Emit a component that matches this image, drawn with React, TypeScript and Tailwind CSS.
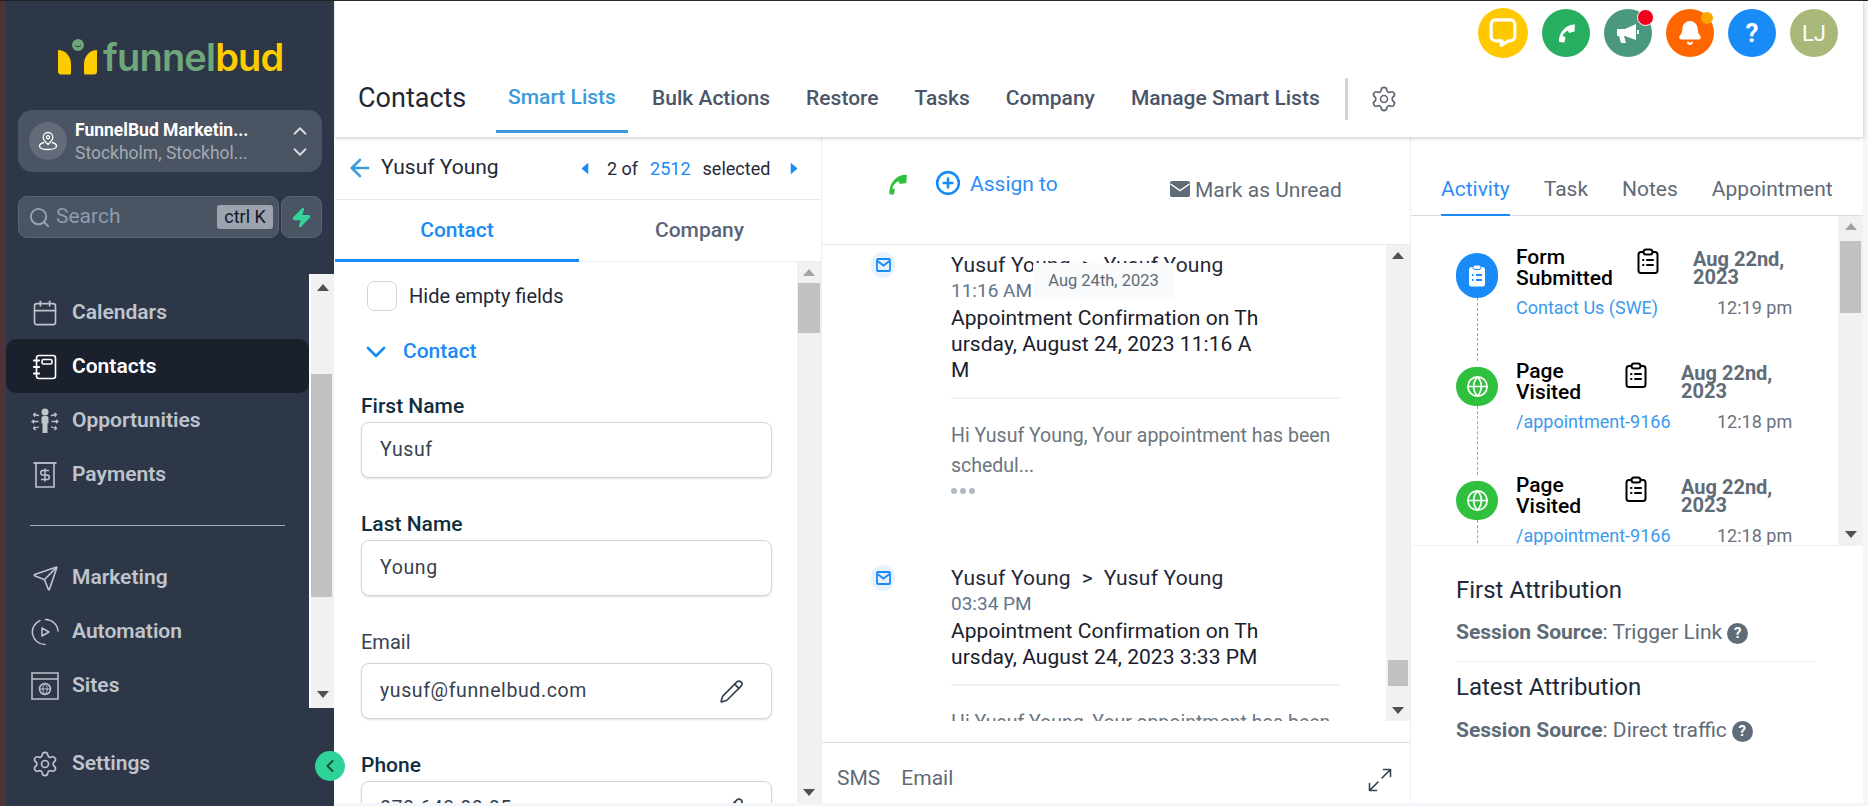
import React from "react";
import { Calendar, Send, Settings, Search, ChevronUp, ChevronDown, ChevronLeft, ArrowLeft, CirclePlus, Pencil, Zap, Bell, Globe } from "lucide-react";

const font = "font-['Roboto','Liberation_Sans',sans-serif]";

function Arrow({ up, className = "" }: { up?: boolean; className?: string }) {
  return (
    <svg width="12" height="7" viewBox="0 0 12 7" className={className}>
      <path d={up ? "M6 0L12 7H0Z" : "M0 0H12L6 7Z"} fill="currentColor" />
    </svg>
  );
}

function Bar({ thumb, w = "w-[24px]", upColor = "text-[#a3a3a3]", pad = "px-[2px]" }: { thumb: string; w?: string; upColor?: string; pad?: string }) {
  return (
    <div className={`${w} shrink-0 bg-[#f1f1f1] flex flex-col items-center relative ${pad}`}>
      <Arrow up className={`mt-[7px] shrink-0 ${upColor}`} />
      <div className={`w-full bg-[#c1c1c1] shrink-0 ${thumb}`} />
      <div className="flex-1" />
      <Arrow className="mb-[7px] shrink-0 text-[#505050]" />
    </div>
  );
}

function Logo() {
  return (
    <div className="flex items-end h-[36px] ml-[52px] mt-[38px]">
      <svg width="44" height="36" viewBox="0 0 44 36" className="shrink-0">
        <path d="M0 11c7 0 13 6 13 14v9a1.500 1.500 0 0 1-1.500 1.500H3c-2 0-3-1-3-3Z" fill="#ffcc00" />
        <path d="M39 11c-7 0-13 6-13 14v9a1.500 1.500 0 0 0 1.500 1.500H36c2 0 3-1 3-3Z" fill="#ffcc00" />
        <circle cx="20" cy="6" r="6" fill="#6fa77a" />
        <path d="M17 6.500c1.500 1.600 4.500 1.600 6 0" stroke="#2d3748" strokeWidth="1" fill="none" />
      </svg>
      <span className="font-['Inter',sans-serif] font-semibold text-[38px] leading-[36px] tracking-[-0.8px] ml-[1px] h-[36px]">
        <span className="text-[#6fa77a]">funnel</span><span className="text-[#ffcc00]">bud</span>
      </span>
    </div>
  );
}

const CalendarIcon = () => <Calendar size={28} strokeWidth={1.4} />;
const NotebookIcon = () => (
  <svg width="28" height="28" viewBox="0 0 28 28" fill="none" stroke="currentColor" strokeWidth="1.600" strokeLinecap="round" strokeLinejoin="round">
    <rect x="5.500" y="2.500" width="19" height="23" rx="2.500" />
    <path d="M3 7.500h5M3 14h5M3 20.500h5" strokeWidth="2.200" />
    <rect x="11" y="6.500" width="10" height="4.500" rx="1.500" />
  </svg>
);
const OppIcon = () => (
  <svg width="30" height="28" viewBox="0 0 30 28" fill="currentColor">
    <circle cx="15" cy="5" r="3.500" />
    <path d="M11.500 11c0-1.200 1-2 2-2h3c1 0 2 .8 2 2v5.500h-1v9.500h-5v-9.500h-1Z" />
    <g stroke="currentColor" strokeWidth="1.300" fill="none" strokeLinecap="round">
      <path d="M8.500 8.500L3.500 7.500M3.500 7.500l1.800-1.200M3.500 7.500l1.200 1.800" />
      <path d="M8 14.500H2M2 14.500l1.600-1.300M2 14.500l1.600 1.300" />
      <path d="M8.500 20L3.500 21.500M3.500 21.500l1.200-1.800M3.500 21.500l1.800 1.200" />
      <path d="M21.500 8.500L26.500 7.500M26.500 7.500l-1.800-1.200M26.500 7.500l-1.200 1.800" />
      <path d="M22 14.500h6M28 14.500l-1.600-1.300M28 14.500l-1.600 1.300" />
      <path d="M21.500 20l5 1.500M26.500 21.500l-1.200-1.800M26.500 21.500l-1.800 1.200" />
    </g>
  </svg>
);
const PayIcon = () => (
  <svg width="28" height="28" viewBox="0 0 28 28" fill="none" stroke="currentColor" strokeWidth="1.600">
    <path d="M2.500 2h23" strokeWidth="1.800" />
    <path d="M5 2v24h18V2" />
    <path d="M18 9.500h-6a1.500 1.500 0 0 0 0 4.500h4a1.500 1.500 0 0 1 0 4.500h-6M14 7.500v13" strokeWidth="1.500" />
  </svg>
);
const AutoIcon = () => (
  <svg width="28" height="28" viewBox="0 0 28 28" fill="none" stroke="currentColor" strokeWidth="1.500" strokeLinecap="round" strokeLinejoin="round">
    <path d="M14.500 1.500A12.500 12.500 0 0 1 27 13" />
    <path d="M9 2.500A12.500 12.500 0 0 0 14 26.500" />
    <path d="M11 10l7 4-7 4Z" />
  </svg>
);
const SiteIcon = () => (
  <svg width="28" height="28" viewBox="0 0 28 28" fill="none" stroke="currentColor" strokeWidth="1.500">
    <rect x="1" y="1" width="26" height="26" />
    <path d="M1 7h26" />
    <circle cx="14" cy="17" r="5.500" />
    <path d="M8.500 17h11M14 11.500c-3 3.500-3 7.500 0 11M14 11.500c3 3.500 3 7.500 0 11" strokeWidth="1" />
  </svg>
);

function NavItem({ icon, label, active }: { icon: React.ReactNode; label: string; active?: boolean }) {
  return (
    <div className={`flex items-center h-[54px] pl-[24px] pt-[2px] rounded-[10px] ${active ? "bg-[#1a202c] text-white" : "text-[#bfc4cc]"}`}>
      <span className="w-[30px] flex justify-center shrink-0">{icon}</span>
      <span className="ml-[12px] text-[21px] font-semibold">{label}</span>
    </div>
  );
}

function Sidebar() {
  return (
    <aside className="w-[328px] shrink-0 bg-[#2d3748] flex flex-col relative">
      <Logo />
      <div className="mx-[12px] mt-[35px] h-[62px] rounded-[14px] bg-[#4a5462] flex items-center pl-[11px]">
        <span className="w-[38px] h-[38px] rounded-full bg-[#636b78] flex items-center justify-center shrink-0">
          <svg width="20" height="20" viewBox="0 0 20 20" fill="none" stroke="white" strokeWidth="1.300">
            <path d="M10 1.500a4.800 4.800 0 0 1 4.800 4.800c0 3-4.800 7.200-4.800 7.200S5.200 9.300 5.200 6.300A4.800 4.800 0 0 1 10 1.500Z" />
            <circle cx="10" cy="6.300" r="1.600" />
            <path d="M6 11.500c-3 .8-4.500 2-4.500 3.500 0 2 3.500 3.500 8.500 3.500s8.500-1.500 8.500-3.500c0-1.500-1.500-2.700-4.500-3.500" />
          </svg>
        </span>
        <div className="ml-[8px] w-[210px]">
          <div className="text-white text-[17.500px] font-bold leading-[24px] whitespace-nowrap">FunnelBud Marketin...</div>
          <div className="text-[#a3a9b3] text-[17.500px] leading-[22px] whitespace-nowrap">Stockholm, Stockhol...</div>
        </div>
        <div className="flex flex-col items-center text-[#d8dbe0] ml-[4px]">
          <ChevronUp size={22} strokeWidth={2} className="-mb-[1px]" />
          <ChevronDown size={22} strokeWidth={2} />
        </div>
      </div>
      <div className="mx-[12px] mt-[24px] h-[42px] flex gap-[2px]">
        <div className="flex-1 rounded-[9px] bg-[#4a5462] border border-[#5b6473] flex items-center pl-[9px] pr-[5px]">
          <Search size={23} strokeWidth={2} className="text-[#98a3b1]" />
          <span className="ml-[5px] text-[21px] text-[#8b9bb0] flex-1">Search</span>
          <span className="h-[24px] w-[56px] rounded-[3px] bg-[#9ca3af] text-[#111827] text-[18px] leading-[24px] text-center">ctrl K</span>
        </div>
        <div className="w-[41px] rounded-[9px] bg-[#4a5462] border border-[#5b6473] flex items-center justify-center">
          <Zap size={21} className="text-[#34d399]" fill="#34d399" />
        </div>
      </div>
      <div className="mt-[36px] h-[434px] flex">
        <div className="w-[303px] pt-[11px] overflow-hidden">
          <NavItem icon={<CalendarIcon />} label="Calendars" />
          <NavItem active icon={<NotebookIcon />} label="Contacts" />
          <NavItem icon={<OppIcon />} label="Opportunities" />
          <NavItem icon={<PayIcon />} label="Payments" />
          <div className="mx-[24px] mt-[24px] h-px bg-[#a0aec0] w-[255px]" />
          <div className="mt-[24px]">
            <NavItem icon={<Send size={27} strokeWidth={1.4} />} label="Marketing" />
            <NavItem icon={<AutoIcon />} label="Automation" />
            <NavItem icon={<SiteIcon />} label="Sites" />
          </div>
        </div>
        <div className="w-[25px] bg-white flex pl-[2px]">
          <div className="w-[23px] bg-[#f1f1f1] flex flex-col items-center">
            <Arrow up className="mt-[10px] shrink-0 text-[#505050]" />
            <div className="w-[21px] self-start bg-[#c1c1c1] mt-[83px] h-[223px] shrink-0" />
            <div className="flex-1" />
            <Arrow className="mb-[10px] shrink-0 text-[#505050]" />
          </div>
        </div>
      </div>
      <div className="mt-[28px]">
        <NavItem icon={<Settings size={28} strokeWidth={1.4} />} label="Settings" />
      </div>
      <button className="absolute left-[309px] top-[750px] w-[30px] h-[30px] rounded-full bg-[#2fd39a] flex items-center justify-center z-10 text-[#14532d]">
        <ChevronLeft size={20} strokeWidth={2.5} />
      </button>
    </aside>
  );
}

function Round({ className, children, dot }: { className: string; children: React.ReactNode; dot?: React.ReactNode }) {
  return (
    <div className={`relative rounded-full flex items-center justify-center shrink-0 ${className}`}>
      {children}
      {dot}
    </div>
  );
}

function Header() {
  const items = ["Bulk Actions", "Restore", "Tasks", "Company", "Manage Smart Lists"];
  return (
    <header className="h-[136px] shrink-0 bg-white flex flex-col shadow-[0_1px_4px_rgba(120,130,140,0.45)] relative z-[1]">
      <div className="flex items-center justify-end h-[64px] shrink-0 pr-[25px] gap-[14px]">
        <Round className="w-[50px] h-[50px] bg-[#ffc800]">
          <svg width="28" height="31" viewBox="0 0 30 34" fill="none">
            <path d="M7 2h16a5 5 0 0 1 5 5v13a5 5 0 0 1-5 5h-2l-8 5 1-5H7a5 5 0 0 1-5-5V7a5 5 0 0 1 5-5Z" fill="#ffc800" stroke="white" strokeWidth="3.500" strokeLinejoin="round" />
          </svg>
        </Round>
        <Round className="w-[48px] h-[48px] bg-[#27ae60]">
          <svg width="24" height="24" viewBox="0 0 24 24"><path d="M21 3.500c-8 -1-17 8-16 17.500l5.500.5 1-5.500-3-1c1-2.500 3-4.500 5.500-5.500l1 2.500 5.500-1.500Z" fill="white" /></svg>
        </Round>
        <Round className="w-[48px] h-[48px] bg-[#4a9880]" dot={<span className="absolute top-0 right-[-2px] w-[17px] h-[17px] rounded-full bg-[#f0001c] border border-white" />}>
          <svg width="24" height="24" viewBox="0 0 24 24" fill="white"><path d="M1 8h8l11-5v16L9 15H8l2 7H5l-2-7H1Z" /><rect x="21" y="9" width="2" height="4" /></svg>
        </Round>
        <Round className="w-[48px] h-[48px] bg-[#ff6600]" dot={<span className="absolute top-[3px] right-[1px] w-[12px] h-[12px] rounded-full bg-[#f8a800]" />}>
          <Bell size={26} fill="white" className="text-white" />
        </Round>
        <Round className="w-[48px] h-[48px] bg-[#188bf6]">
          <span className="text-white text-[26px] font-bold">?</span>
        </Round>
        <Round className="w-[48px] h-[48px] bg-[#a8b878]">
          <span className="text-white text-[22px]">LJ</span>
        </Round>
      </div>
      <div className="flex items-center h-[68px] shrink-0 pl-[23px]">
        <span className="text-[27px] text-[#1f2937] w-[138px] pb-[2px]">Contacts</span>
        <div className="h-full flex items-center border-b-[3px] border-[#3b9ad9] text-[#3b9ad9] text-[21px] font-medium mr-[12px] w-[132px] justify-center">Smart Lists</div>
        {items.map((t) => (
          <div key={t} className="px-[12px] mr-[12px] text-[21px] font-medium text-[#4a5568]">{t}</div>
        ))}
        <div className="w-[3px] h-[42px] bg-[#d1d5db] ml-[1px]" />
        <Settings size={28} strokeWidth={1.4} className="ml-[22px] text-[#5f6672]" />
      </div>
    </header>
  );
}

function Field({ label, value, strong, edit, cls = "", gap = "mt-[5px]" }: { label: string; value: string; strong?: boolean; edit?: boolean; cls?: string; gap?: string }) {
  return (
    <div className={cls}>
      <div className={`leading-[22px] ${strong ? "text-[21px] font-medium text-[#0f2f3f]" : "text-[20px] text-[#374151]"}`}>{label}</div>
      <div className={`${gap} h-[56px] w-[411px] rounded-[8px] border border-[#d1d5db] bg-white shadow-[0_1px_2px_rgba(0,0,0,0.12)] flex items-center pl-[18px] pr-[27px] shrink-0`}>
        <span className="flex-1 text-[19.500px] text-[#374151] tracking-[0.6px] whitespace-nowrap">{value}</span>
        {edit && <Pencil size={25} strokeWidth={1.6} className="text-[#374151]" />}
      </div>
    </div>
  );
}

function LeftPanel() {
  return (
    <section className="w-[487px] shrink-0 border-r border-[#eceef1] flex flex-col bg-white">
      <div className="h-[63px] shrink-0 flex items-center border-b border-[#e8eaed] pl-[11px] text-[#1f2937]">
        <ArrowLeft size={28} strokeWidth={2.2} className="text-[#3b9ad9] shrink-0" />
        <span className="ml-[7px] text-[21px] w-[198px] shrink-0">Yusuf Young</span>
        <Arrow up className="-rotate-90 text-[#188bf6] w-[12px] shrink-0" />
        <span className="ml-[16px] text-[18px]">2 of</span>
        <span className="ml-[12px] text-[18px] text-[#188bf6]">2512</span>
        <span className="ml-[12px] text-[18px]">selected</span>
        <Arrow up className="rotate-90 text-[#188bf6] ml-[18px] w-[12px] shrink-0" />
      </div>
      <div className="h-[62px] shrink-0 flex border-b border-[#eceef1]">
        <div className="w-[244px] flex items-center justify-center text-[#188bf6] text-[21px] font-medium border-b-[3px] border-[#188bf6] -mb-px pt-[2px]">Contact</div>
        <div className="flex-1 flex items-center justify-center text-[#5b6478] text-[21px] font-medium -ml-[1px]">Company</div>
      </div>
      <div className="flex-1 flex min-h-0">
        <div className="flex-1 overflow-hidden pl-[26px]">
          <label className="flex items-center ml-[6px] mt-[19px]">
            <span className="w-[30px] h-[30px] rounded-[7px] border border-[#d1d5db] bg-white" />
            <span className="ml-[12px] text-[20px] text-[#1f2937]">Hide empty fields</span>
          </label>
          <div className="flex items-center mt-[25px] h-[32px] text-[#188bf6]">
            <ChevronDown size={32} strokeWidth={2} className="-ml-[1px]" />
            <span className="ml-[11px] text-[21px] font-medium">Contact</span>
          </div>
          <Field cls="mt-[27px]" label="First Name" value="Yusuf" strong />
          <Field cls="mt-[35px]" label="Last Name" value="Young" strong />
          <Field cls="mt-[35px]" gap="mt-[10px]" label="Email" value="yusuf@funnelbud.com" edit />
          <Field cls="mt-[35px]" label="Phone" value="070 643 00 05" strong edit />
        </div>
        <Bar thumb="mt-[7px] h-[50px]" pad="px-[1px]" />
      </div>
    </section>
  );
}

function MailDot() {
  return (
    <span className="w-[24px] h-[26px] rounded-full bg-[#e8f2fe] flex items-center justify-center text-[#188bf6]">
      <svg width="15" height="14" viewBox="0 0 15 14" fill="none" stroke="currentColor" strokeWidth="1.800"><rect x="1" y="1" width="13" height="12" rx="1" /><path d="M1.500 3l6 4.500 6-4.500" /></svg>
    </span>
  );
}

function Message({ time, lines, cls = "" }: { time: string; lines: string[]; cls?: string }) {
  return (
    <div className={`flex ${cls}`}>
      <div className="w-[129px] flex justify-end pr-[56px] shrink-0"><MailDot /></div>
      <div className="flex-1">
        <div className="text-[21px] text-[#1f2937] leading-[26px] tracking-[0.2px] whitespace-pre">Yusuf Young  {">"}  Yusuf Young</div>
        <div className="text-[19px] text-[#64748b] leading-[26px]">{time}</div>
        <div className="text-[21px] text-[#1a202c] leading-[26px] mt-[1px] tracking-[0.05px] whitespace-nowrap">
          {lines.map((l) => <div key={l}>{l}</div>)}
        </div>
        <div className="w-[390px] h-[2px] bg-[#eef3f7] mt-[14px]" />
        <div className="mt-[22px] text-[19.500px] text-[#6b7680] leading-[30px] w-[400px]">Hi Yusuf Young, Your appointment has been schedul...</div>
      </div>
    </div>
  );
}

function CenterPanel() {
  return (
    <section className="w-[588px] shrink-0 flex flex-col bg-white">
      <div className="h-[108px] shrink-0 border-b border-[#e8eaed] flex pl-[61px] text-[#5f6b76]">
        <svg width="26" height="26" viewBox="0 0 24 24" className="mt-[34px] shrink-0"><path d="M22 3.500c-9 -1-17 8-16 18l4 .5 1-5-2.500-1c1-3 3-5.500 6-6.500l1 2.500 6-1Z" fill="#2fc13d" /></svg>
        <CirclePlus size={26} strokeWidth={2.4} className="text-[#188bf6] mt-[33px] ml-[26px] shrink-0" />
        <span className="text-[#2e8df7] text-[21px] ml-[9px] mt-[32px] h-[28px] w-[200px] shrink-0">Assign to</span>
        <svg width="20" height="16" viewBox="0 0 20 16" className="mt-[44px] shrink-0"><rect width="20" height="16" rx="2" fill="#5f6b76" /><path d="M0.500 3l9.500 6.500L19.500 3" fill="none" stroke="white" strokeWidth="1.500" /></svg>
        <span className="text-[21px] ml-[5px] mt-[38px] h-[28px] whitespace-nowrap">Mark as Unread</span>
      </div>
      <div className="flex h-[476px] shrink-0 relative">
        <div className="flex-1 overflow-hidden pt-[7px]">
          <Message time="11:16 AM" lines={["Appointment Confirmation on Th", "ursday, August 24, 2023 11:16 A", "M"]} />
          <div className="ml-[129px] flex gap-[3px] mt-[7px]">
            {[0, 1, 2].map((i) => <span key={i} className="w-[6px] h-[6px] rounded-full bg-[#b0bac3]" />)}
          </div>
          <Message cls="mt-[71px]" time="03:34 PM" lines={["Appointment Confirmation on Th", "ursday, August 24, 2023 3:33 PM"]} />
        </div>
        <div className="absolute left-[211px] top-[18px] w-[141px] h-[36px] rounded-[3px] bg-[#f8fafb] text-[#5f6b76] text-[16.500px] flex items-center justify-center whitespace-nowrap">Aug 24th, 2023</div>
        <Bar thumb="mt-[401px] h-[26px]" upColor="text-[#505050]" />
      </div>
      <div className="h-[21px] shrink-0" />
      <div className="flex-1 border-t border-[#d8dadd] flex items-center pl-[15px] text-[#5f6b76] text-[21px] pt-[12px]">
        <span>SMS</span>
        <span className="ml-[21px]">Email</span>
        <svg width="24" height="24" viewBox="0 0 24 24" fill="none" stroke="#374151" strokeWidth="1.600" strokeLinecap="round" strokeLinejoin="round" className="ml-auto mr-[18px] mt-[2px]">
          <path d="M14 10L22.500 1.500M15.500 1.500h7v7" />
          <path d="M10 14L1.500 22.500M8.500 22.500h-7v-7" />
        </svg>
      </div>
    </section>
  );
}

function Clip({ className = "" }: { className?: string }) {
  return (
    <svg width="22" height="26" viewBox="0 0 22 26" fill="none" stroke="currentColor" strokeWidth="2" strokeLinecap="round" className={className}>
      <path d="M6 4H4a2.500 2.500 0 0 0-2.500 2.500v16A2.500 2.500 0 0 0 4 25h14a2.500 2.500 0 0 0 2.500-2.500v-16A2.500 2.500 0 0 0 18 4h-2" />
      <rect x="6.500" y="1.500" width="9" height="5" rx="2.500" />
      <path d="M6 12h.5M10 12h6M6 17h.5M10 17h6" />
    </svg>
  );
}

function Activity({ kind, t1, t2, link, time, tw }: { kind: "form" | "page"; t1: string; t2: string; link: string; time: string; tw: string }) {
  return (
    <div className="h-[114px] flex shrink-0">
      <div className="w-[42px] flex flex-col items-center shrink-0 pt-[6px]">
        <div className={`w-[42px] rounded-full flex items-center justify-center text-white shrink-0 ${kind === "form" ? "h-[45px] bg-[#188bf6]" : "h-[39px] bg-[#2fc13d]"}`}>
          {kind === "form" ? (
            <svg width="18" height="23" viewBox="0 0 18 23">
              <rect x="1" y="3" width="16" height="19.500" rx="2.500" fill="white" />
              <rect x="5" y="1" width="8" height="4.500" rx="2" fill="white" stroke="#188bf6" strokeWidth="1" />
              <path d="M4 11h1.500M8 11h6M4 16h1.500M8 16h6" stroke="#188bf6" strokeWidth="2" />
            </svg>
          ) : (
            <Globe size={23} strokeWidth={1.800} />
          )}
        </div>
        <div className="flex-1 border-l border-dashed border-[#9ca3af]" />
      </div>
      <div className="ml-[18px] w-[280px]">
        <div className="flex">
          <div className={`${tw} text-[21px] font-medium leading-[20.500px] text-black shrink-0`}>{t1}<br />{t2}</div>
          <Clip className="text-black mt-[1px] shrink-0" />
          <div className="ml-[34px] text-[20px] font-bold leading-[18px] text-[#5f6b76] mt-[3px] w-[100px] whitespace-nowrap">Aug 22nd,<br />2023</div>
        </div>
        <div className="flex justify-between mt-[8px] text-[18px] leading-[24px] whitespace-nowrap">
          <span className="text-[#3b9af0]">{link}</span>
          <span className="text-[#6b7280] w-[76px] mr-[3px]">{time}</span>
        </div>
      </div>
    </div>
  );
}

function Help() {
  return <span className="ml-[5px] w-[21px] h-[21px] rounded-full bg-[#5f6b76] text-white text-[15px] font-bold leading-[21px] text-center shrink-0">?</span>;
}

function RightPanel() {
  return (
    <section className="flex-1 flex flex-col border-l border-[#eceef1] bg-white min-w-0">
      <div className="h-[79px] shrink-0 flex items-end border-b border-[#d9dee3] pl-[30px] text-[21px] text-[#5f6b76] whitespace-nowrap">
        <span className="h-[50px] flex items-center border-b-[2px] border-[#188bf6] text-[#2e8df7] -mb-px">Activity</span>
        <span className="h-[50px] flex items-center ml-[34px]">Task</span>
        <span className="h-[50px] flex items-center ml-[34px]">Notes</span>
        <span className="h-[50px] flex items-center ml-[34px]">Appointment</span>
      </div>
      <div className="h-[330px] shrink-0 flex border-b border-[#eef0f3]">
        <div className="flex-1 overflow-hidden pl-[45px] pt-[31px]">
          <Activity kind="form" t1="Form" t2="Submitted" link="Contact Us (SWE)" time="12:19 pm" tw="w-[121px]" />
          <Activity kind="page" t1="Page" t2="Visited" link="/appointment-9166" time="12:18 pm" tw="w-[109px]" />
          <Activity kind="page" t1="Page" t2="Visited" link="/appointment-9166" time="12:18 pm" tw="w-[109px]" />
        </div>
        <Bar w="w-[25px]" thumb="mt-[11px] h-[72px]" />
      </div>
      <div className="pl-[45px] pt-[30px] flex-1">
        <div className="text-[24px] leading-[28px] text-[#1f2937]">First Attribution</div>
        <div className="mt-[16px] flex items-center text-[21px] text-[#5f6b76] h-[26px]">
          <b className="font-bold">Session Source</b>: Trigger Link
          <Help />
        </div>
        <div className="mt-[15px] w-[360px] h-px bg-[#eef0f3]" />
        <div className="mt-[11px] text-[24px] leading-[28px] text-[#1f2937]">Latest Attribution</div>
        <div className="mt-[17px] flex items-center text-[21px] text-[#5f6b76] h-[26px]">
          <b className="font-bold">Session Source</b>: Direct traffic
          <Help />
        </div>
      </div>
    </section>
  );
}

export default function App() {
  return (
    <div className={`${font} w-[1868px] h-[806px] overflow-hidden flex flex-col bg-[#f3f6fa]`}>
      <div className="h-px bg-[#222] shrink-0" />
      <div className="flex flex-1 min-h-0">
        <div className="w-[6px] shrink-0 bg-[#4d3338]" />
        <Sidebar />
        <div className="w-px bg-white shrink-0" />
        <main className="flex-1 flex flex-col min-w-0 mr-[5px] pb-[3px]">
          <Header />
          <div className="flex-1 flex min-h-0 bg-white">
            <LeftPanel />
            <CenterPanel />
            <RightPanel />
          </div>
        </main>
      </div>
    </div>
  );
}
